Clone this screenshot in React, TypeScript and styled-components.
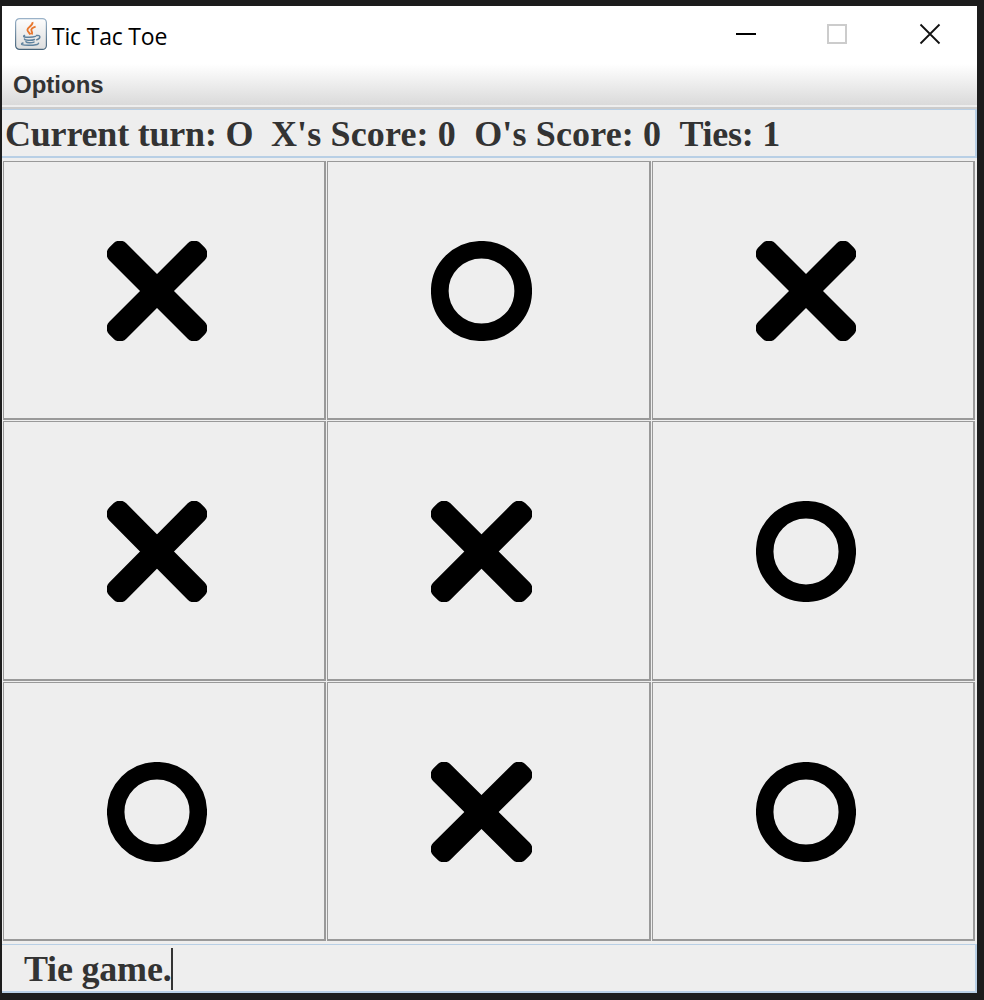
import React from 'react';
import styled, { createGlobalStyle } from 'styled-components';

const GlobalStyle = createGlobalStyle`
  * { box-sizing: border-box; }
  body { margin: 0; background: #1c1c1c; overflow: hidden; }
`;

const Desktop = styled.div`
  width: 984px;
  height: 1000px;
  padding: 6px 7px 7px 2px;
  background: #1c1c1c;
`;

const Frame = styled.main`
  width: 975px;
  height: 987px;
  display: flex;
  flex-direction: column;
  background: #eeeeee;
`;

const TitleBar = styled.header`
  height: 58px;
  flex: none;
  display: flex;
  align-items: flex-start;
  padding: 12px 36px 0 13px;
  background: #fff;
`;

const Title = styled.span`
  flex: 1;
  margin: 1px 0 0 5px;
  font: 23px/34px 'Open Sans', sans-serif;
  letter-spacing: -0.2px;
  color: #000;
  white-space: nowrap;
`;

const AppIcon = styled.svg`
  flex: none;
`;

const WindowControls = styled.div`
  display: flex;
  gap: 71px;
  padding-top: 5px;
`;

const MenuBar = styled.nav`
  height: 45px;
  flex: none;
  padding: 0 11px;
  background: linear-gradient(#fff, #dadada) 0 0 / 100% 41px no-repeat #eeeeee;
  border-bottom: 2px solid #cccccc;
`;

const MenuItem = styled.span`
  display: block;
  font: bold 24px/42px 'Liberation Sans', Arial, sans-serif;
  color: #333;
`;

const TextField = styled.div<{ $indent: number }>`
  display: flex;
  align-items: center;
  flex: none;
  height: 49px;
  padding: 1px 0 0 ${(p) => p.$indent}px;
  border: solid #b8cfe5;
  border-width: 1px 2px 2px 0;
  font: bold 36px/42px 'Liberation Serif', 'Times New Roman', serif;
  color: #333;
  white-space: pre;
`;

const Phrase = styled.span<{ $tracking: number }>`
  letter-spacing: ${(p) => p.$tracking}px;
`;

const Caret = styled.span`
  width: 2px;
  height: 42px;
  background: #333;
`;

const Board = styled.section`
  height: 780px;
  flex: none;
  display: grid;
  grid-template-columns: 323px 324px 323px;
  grid-template-rows: 259px 260px 259px;
  gap: 1px;
  margin: 3px 0 3px 1px;
`;

const Cell = styled.button`
  display: flex;
  align-items: center;
  justify-content: center;
  padding: 2px 15px 0 0;
  background: #eeeeee;
  border: solid #999;
  border-width: 1px 2px 2px 1px;
  border-radius: 0;
`;

const JavaIcon = () => (
  <AppIcon width="32" height="32" viewBox="0 0 32 32" fill="none">
    <defs>
      <linearGradient id="tile" x1="0" y1="0" x2="0" y2="1">
        <stop offset="0" stopColor="#fdfdfd" />
        <stop offset="1" stopColor="#dedede" />
      </linearGradient>
      <linearGradient id="edge" x1="0" y1="0" x2="0" y2="1">
        <stop offset="0" stopColor="#9ab2c8" />
        <stop offset="1" stopColor="#48657c" />
      </linearGradient>
    </defs>
    <rect x=".6" y=".6" width="30.8" height="30.8" rx="4" fill="url(#tile)" stroke="url(#edge)" strokeWidth="1.2" />
    <path d="M17.4 4.200c1.300 3.300-5.200 4.800-5 7.800.2 2 2.100 2.700 3.100 4.500M20.600 8.600c-3.200.9-4.900 2.400-4.100 4.200.5 1.100 1.300 1.800.2 3.600" stroke="#e8762d" strokeWidth="1.9" />
    <g stroke="#5f829e" strokeWidth="1.5" strokeLinecap="round">
      <path d="M9.500 17.500c-2.500 1.500 1 1.800 5 1.700 2.500 0 4.500-.3 6-.8M9.500 21c0 1.500 7 1.700 10 .5M11 23.700c1 1.300 5.500 1.300 8 .4" />
      <path d="M21.500 17.600c4.300-1 4.500 2.700.3 4.100" />
      <path d="M8 25c-3 1.200-1 2.200 5.500 2.300 6 .1 10-.8 10-2.100" />
    </g>
  </AppIcon>
);

type MarkProps = { width: number; height: number };

const XMark = ({ width, height }: MarkProps) => (
  <svg width={width} height={height} viewBox="-50 -50 100 100" preserveAspectRatio="none">
    <rect x="-64.500" y="-12" width="129" height="24" rx="9" transform="rotate(45)" />
    <rect x="-64.500" y="-12" width="129" height="24" rx="9" transform="rotate(-45)" />
  </svg>
);

const OMark = ({ width, height }: MarkProps) => (
  <svg width={width} height={height} viewBox="-50 -50 100 100" preserveAspectRatio="none">
    <circle r="41.300" fill="none" stroke="#000" strokeWidth="17.500" />
  </svg>
);

const marks = ['X', 'O', 'X', 'X', 'X', 'O', 'O', 'X', 'O'];

export default function App() {
  return (
    <>
      <GlobalStyle />
      <Desktop>
        <Frame>
          <TitleBar>
            <JavaIcon />
            <Title>Tic Tac Toe</Title>
            <WindowControls>
              <svg width="20" height="22"><path d="M0 11h20" stroke="#000" strokeWidth="2" /></svg>
              <svg width="21" height="22"><rect x="1" y="2" width="18" height="18" fill="none" stroke="#ccc" strokeWidth="2" /></svg>
              <svg width="22" height="22"><path d="M1.500 1.500l19 19M20.500 1.500l-19 19" stroke="#111" strokeWidth="1.800" /></svg>
            </WindowControls>
          </TitleBar>
          <MenuBar>
            <MenuItem>Options</MenuItem>
          </MenuBar>
          <TextField $indent={3}>
            <Phrase $tracking={-0.2}>{'Current turn: O  '}</Phrase>
            <Phrase $tracking={0.14}>{"X's Score: 0  "}</Phrase>
            <Phrase $tracking={0.14}>{"O's Score: 0  "}</Phrase>
            <Phrase $tracking={-0.25}>Ties: 1</Phrase>
          </TextField>
          <Board>
            {marks.map((mark, i) => {
              const Mark = mark === 'X' ? XMark : OMark;
              return (
                <Cell key={i} aria-label={mark}>
                  <Mark width={i % 3 === 1 ? 101 : 100} height={Math.floor(i / 3) === 1 ? 101 : 100} />
                </Cell>
              );
            })}
          </Board>
          <TextField $indent={5}>
            <Phrase $tracking={-0.2}>{'  Tie game.'}</Phrase>
            <Caret />
          </TextField>
        </Frame>
      </Desktop>
    </>
  );
}
